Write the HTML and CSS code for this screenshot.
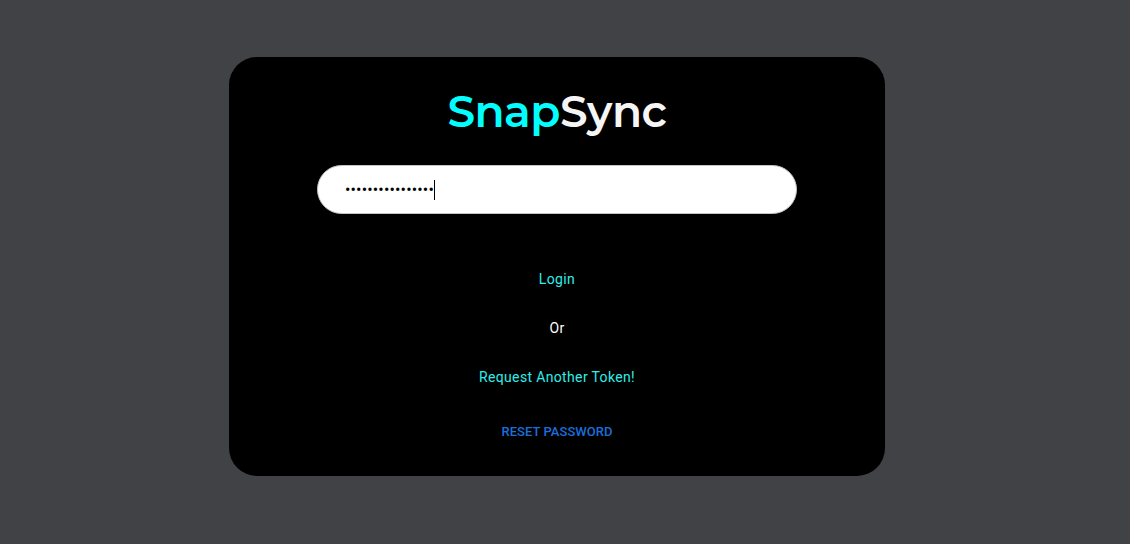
FILE: index.html
```
<!DOCTYPE html>
<html lang="en">
<head>
<meta charset="utf-8">
<title>SnapSync</title>
<link rel="stylesheet" href="styles.css">
</head>
<body>
<main class="card">
  <h1 class="brand"><span class="snap">Snap</span><span class="sync">Sync</span></h1>
  <div class="field"><span class="dots">••••••••••••••••</span><span class="caret"></span></div>
  <a class="link login">Login</a>
  <p class="or">Or</p>
  <a class="link request">Request Another Token!</a>
  <a class="reset">RESET PASSWORD</a>
</main>
</body>
</html>
```

FILE: styles.css
```
* { box-sizing: border-box; margin: 0; }
body {
  height: 544px;
  padding: 57px 0 0 229px;
  background: #414246;
  font-family: Roboto, sans-serif;
  overflow: hidden;
}
.card {
  width: 656px;
  height: 419px;
  background: #000;
  border-radius: 28px;
  display: flex;
  flex-direction: column;
  align-items: center;
  padding-top: 27px;
  color: #fff;
  font-size: 14px;
  line-height: 20px;
  letter-spacing: 0.35px;
}
.brand {
  display: flex;
  height: 54px;
  font: 600 44px/54px Montserrat, Inter, sans-serif;
  letter-spacing: -0.55px;
}
.snap { color: #0ff; }
.sync { color: #f5f5f5; }
.field {
  display: flex;
  align-items: center;
  width: 480px;
  height: 49px;
  margin-top: 27px;
  padding-left: 27px;
  border: 1px solid #c4c4c4;
  border-radius: 25px;
  background: #fff;
  color: #000;
}
.dots { font-size: 16px; letter-spacing: 0.16px; }
.caret { width: 1px; height: 20px; background: #000; }
.link { color: #2eeeea; }
.login { margin-top: 55px; }
.or { margin-top: 29px; }
.request { margin-top: 29px; }
.reset {
  margin-top: 35px;
  color: #1a6fdc;
  font-size: 13px;
  font-weight: 500;
  letter-spacing: 0.05px;
}
```
